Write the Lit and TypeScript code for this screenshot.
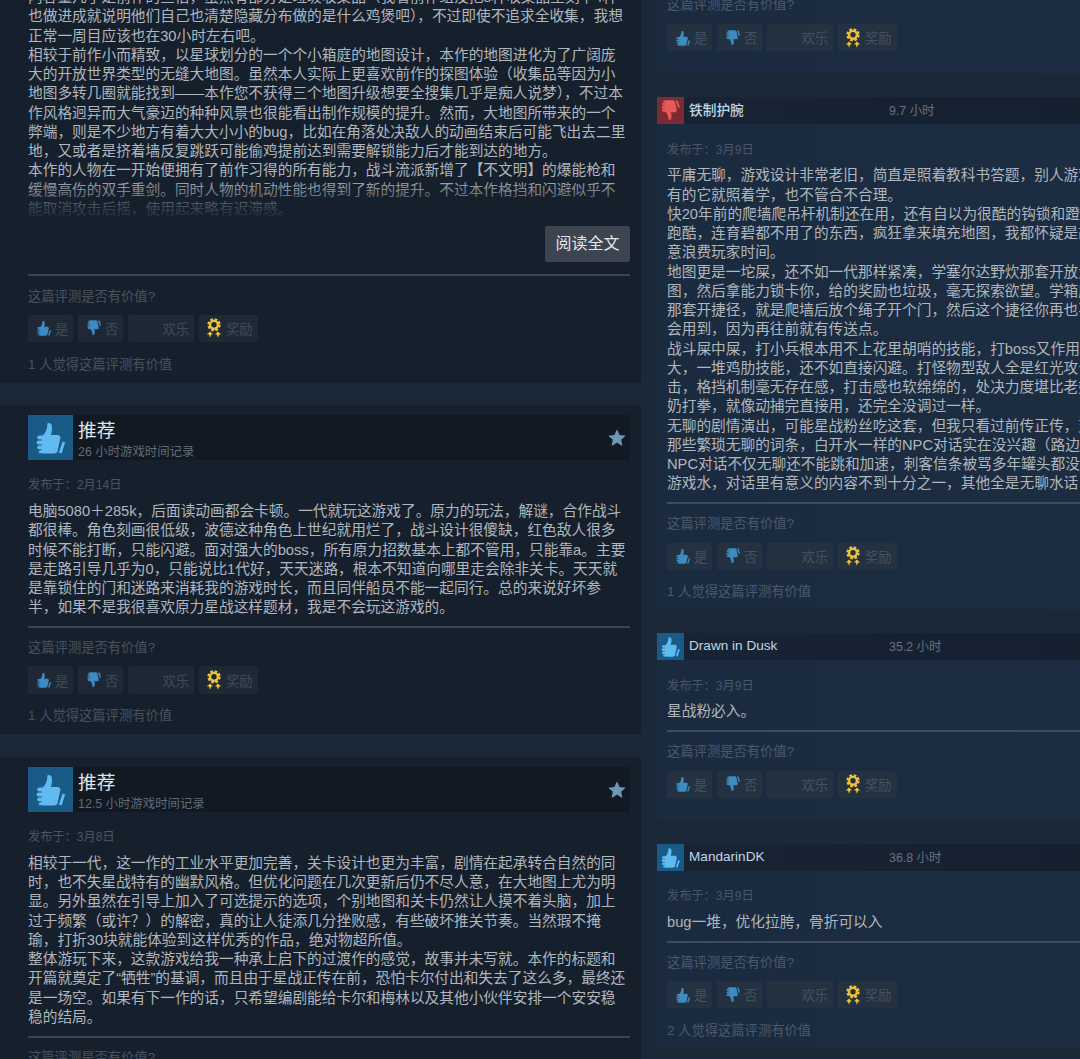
import { LitElement, html, css, svg } from "lit";
import { customElement } from "lit/decorators.js";

const thumbShape = svg`
  <path d="M19.4 7.4c1.8-1 4.1.1 4.5 2.5.5 3-.1 6.2-1 9h6.6c2 0 3.2 1.6 2.8 3.4l-2.6 12.2c-.4 1.8-1.8 3-3.6 3h-9.4c-1.3 0-2.2-.6-2.7-1.7-.2-.6-.2-15.4.2-15.8 2.9-2.6 5-6.6 5.2-12.6z"/>
  <rect x="9.2" y="19.4" width="8" height="4" rx="2"/>
  <rect x="8.6" y="24.4" width="8" height="4" rx="2"/>
  <rect x="9.2" y="29.4" width="7.4" height="3.8" rx="1.9"/>
  <rect x="10.8" y="34.2" width="6" height="3" rx="1.5"/>
  <path d="M34.6 25.6l2.6 1-3.6 10.8-2.8-1z"/>`;

const thumbUp = (cls: string) => svg`<svg class=${cls} viewBox="6 5 33 33">${thumbShape}</svg>`;
const thumbDown = (cls: string) => svg`<svg class=${cls} viewBox="6 5 33 33"><g transform="matrix(1 0 0 -1 0 43)">${thumbShape}</g></svg>`;
const medal = svg`<svg class="medal" viewBox="0 0 16 20">
  <circle cx="8" cy="6.8" r="5.5" fill="none" stroke="#f0c03a" stroke-width="2.4" stroke-dasharray="2.6 1.72"/>
  <circle cx="8" cy="6.8" r="3.9" fill="none" stroke="#f0c03a" stroke-width="2.4"/>
  <path fill="#f0c03a" d="M0.8 16.4l3.3-2.8 2.9 2.8-1.9.2-1 3.2-1.2-3.2zM15.2 16.4l-3.3-2.8-2.9 2.8 1.9.2 1 3.2 1.2-3.2z"/>
</svg>`;
const star = svg`<svg class="star" viewBox="0 0 20 19"><path d="M10 .4l2.9 6.3 6.9.8-5.1 4.6 1.4 6.8L10 15.5l-6.1 3.4 1.4-6.8L.2 7.5l6.9-.8z"/></svg>`;

const long1 = [
  "内容量几乎是前作的三倍，虽然有部分是垃圾收集品（我看前作组没把8种收集品里刻下4种",
  "也做进成就说明他们自己也清楚隐藏分布做的是什么鸡煲吧），不过即使不追求全收集，我想",
  "正常一周目应该也在30小时左右吧。",
  "相较于前作小而精致，以星球划分的一个个小箱庭的地图设计，本作的地图进化为了广阔庞",
  "大的开放世界类型的无缝大地图。虽然本人实际上更喜欢前作的探图体验（收集品等因为小",
  "地图多转几圈就能找到——本作您不获得三个地图升级想要全搜集几乎是痴人说梦），不过本",
  "作风格迥异而大气豪迈的种种风景也很能看出制作规模的提升。然而，大地图所带来的一个",
  "弊端，则是不少地方有着大大小小的bug，比如在角落处决敌人的动画结束后可能飞出去二里",
  "地，又或者是挤着墙反复跳跃可能偷鸡提前达到需要解锁能力后才能到达的地方。",
  "本作的人物在一开始便拥有了前作习得的所有能力，战斗流派新增了【不文明】的爆能枪和",
  "缓慢高伤的双手重剑。同时人物的机动性能也得到了新的提升。不过本作格挡和闪避似乎不",
  "能取消攻击后摇，使用起来略有迟滞感。",
];
const long2 = [
  "电脑5080＋285k，后面读动画都会卡顿。一代就玩这游戏了。原力的玩法，解谜，合作战斗",
  "都很棒。角色刻画很低级，波德这种角色上世纪就用烂了，战斗设计很傻缺，红色敌人很多",
  "时候不能打断，只能闪避。面对强大的boss，所有原力招数基本上都不管用，只能靠a。主要",
  "是走路引导几乎为0，只能说比1代好，天天迷路，根本不知道向哪里走会除非关卡。天天就",
  "是靠锁住的门和迷路来消耗我的游戏时长，而且同伴船员不能一起同行。总的来说好坏参",
  "半，如果不是我很喜欢原力星战这样题材，我是不会玩这游戏的。",
];
const long3 = [
  "相较于一代，这一作的工业水平更加完善，关卡设计也更为丰富，剧情在起承转合自然的同",
  "时，也不失星战特有的幽默风格。但优化问题在几次更新后仍不尽人意，在大地图上尤为明",
  "显。另外虽然在引导上加入了可选提示的选项，个别地图和关卡仍然让人摸不着头脑，加上",
  "过于频繁（或许？）的解密，真的让人徒添几分挫败感，有些破坏推关节奏。当然瑕不掩",
  "瑜，打折30块就能体验到这样优秀的作品，绝对物超所值。",
  "整体游玩下来，这款游戏给我一种承上启下的过渡作的感觉，故事并未写就。本作的标题和",
  "开篇就奠定了“牺牲”的基调，而且由于星战正传在前，恐怕卡尔付出和失去了这么多，最终还",
  "是一场空。如果有下一作的话，只希望编剧能给卡尔和梅林以及其他小伙伴安排一个安安稳",
  "稳的结局。",
];
const right2 = [
  "平庸无聊，游戏设计非常老旧，简直是照着教科书答题，别人游戏",
  "有的它就照着学，也不管合不合理。",
  "快20年前的爬墙爬吊杆机制还在用，还有自以为很酷的钩锁和蹬墙",
  "跑酷，连育碧都不用了的东西，疯狂拿来填充地图，我都怀疑是故",
  "意浪费玩家时间。",
  "地图更是一坨屎，还不如一代那样紧凑，学塞尔达野炊那套开放大",
  "图，然后拿能力锁卡你，给的奖励也垃圾，毫无探索欲望。学箱庭",
  "那套开捷径，就是爬墙后放个绳子开个门，然后这个捷径你再也不",
  "会用到，因为再往前就有传送点。",
  "战斗屎中屎，打小兵根本用不上花里胡哨的技能，打boss又作用不",
  "大，一堆鸡肋技能，还不如直接闪避。打怪物型敌人全是红光攻击",
  "击，格挡机制毫无存在感，打击感也软绵绵的，处决力度堪比老奶",
  "奶打拳，就像动捕完直接用，还完全没调过一样。",
  "无聊的剧情演出，可能星战粉丝吃这套，但我只看过前传正传，对",
  "那些繁琐无聊的词条，白开水一样的NPC对话实在没兴趣（路边",
  "NPC对话不仅无聊还不能跳和加速，刺客信条被骂多年罐头都没",
  "游戏水，对话里有意义的内容不到十分之一，其他全是无聊水话",
];

@customElement("app-root")
export class AppRoot extends LitElement {
  static styles = css`
    :host {
      display: block;
      width: 1080px;
      height: 1059px;
      overflow: hidden;
      background: #1b2838;
      font-family: "Liberation Sans", "Noto Sans CJK SC", sans-serif;
    }
    .page { display: flex; align-items: flex-start; }
    .col { flex: none; width: 641px; display: flex; flex-direction: column; }
    .col.left { gap: 22.5px; margin-right: 16px; }
    .col.right { gap: 24px; }
    .card { background: #16202d; padding: 10px 11px 10px 28px; }
    .right .card {
      background: linear-gradient(90deg, #1b2b3f 0%, #1d2e43 100%);
      padding: 0 0 22px 10px;
    }
    .right .card.counted { padding-bottom: 9px; }
    .right .card.first .question { margin-top: -3px; }
    .right .card.first .buttons { margin-top: 11px; }
    .card.first { padding-top: 0; }
    .head { display: flex; height: 45px; background: #111922; position: relative; }
    .right .head { height: 27px; margin-left: -10px; background: linear-gradient(90deg, #182433, #152030 60%, #17222f); }
    .tile { flex: none; width: 45px; height: 45px; background: #1a5a87; display: flex; align-items: center; justify-content: center; }
    .right .tile { width: 27px; height: 27px; }
    .tile.bad { background: #7b2c33; }
    .big { width: 33px; height: 33px; fill: #5fbaf0; }
    .small { width: 21px; height: 21px; fill: #5fbaf0; }
    .tile.bad .small { fill: #e8595c; }
    .title-block { padding-left: 5px; padding-top: 4px; }
    .title { font-size: 18.7px; line-height: 23px; color: #dfe6ec; }
    .sub { font-size: 12.4px; line-height: 15px; margin-top: 3px; color: #616c77; }
    .star { position: absolute; right: 4px; top: 14px; width: 18px; height: 17px; fill: #6b98b6; }
    .name { width: 200px; padding-left: 5px; font-size: 13.6px; line-height: 25px; color: #bfd6ea; }
    .name.bold { font-weight: 500; font-size: 13.7px; line-height: 28px; }
    .hours { font-size: 12.4px; line-height: 29px; color: #667280; }
    .date { margin-top: 17px; font-size: 12.2px; line-height: 16px; color: #4a5560; }
    .right .date { margin-top: 17.6px; color: #475667; }
    .body { margin-top: 9px; font-size: 14.7px; line-height: 19.25px; color: #b0b6bd; }
    .right .body { margin-top: 8.7px; }
    .line { white-space: nowrap; }
    .clip { position: relative; height: 235px; overflow: hidden; margin-top: -12px; }
    .clip .body { margin-top: 0; }
    .fade { position: absolute; left: 0; right: 0; bottom: 0; height: 46px; background: linear-gradient(180deg, rgba(22, 32, 45, 0), rgba(22, 32, 45, 0.78) 70%, #16202d 100%); }
    .more-row { display: flex; justify-content: flex-end; margin-top: 3px; }
    .more { width: 85px; height: 36px; border-radius: 2px; background: #3d4450; color: #e2e7ec; font-size: 16px; line-height: 36px; text-align: center; }
    .rule { height: 2px; margin-top: 8.9px; background: #3b4552; }
    .card.first .rule { margin-top: 12px; }
    .right .rule { margin-top: 8.6px; background: #3e4c5e; }
    .question { margin-top: 12px; font-size: 13.3px; line-height: 16px; color: #47525f; }
    .card.first .question { margin-top: 12.5px; }
    .right .question { margin-top: 12px; color: #4a596b; }
    .buttons { display: flex; gap: 5px; margin-top: 10px; }
    .right .buttons { margin-top: 10.5px; }
    .btn { height: 27.5px; display: flex; align-items: center; border-radius: 2px; background: #1f2936; font-size: 13.3px; color: #3f4a56; box-sizing: border-box; }
    .right .btn { height: 27px; background: #243140; color: #435163; }
    .btn.yes, .btn.no { width: 45px; padding-left: 8px; gap: 3px; }
    .btn.joy { width: 66px; justify-content: flex-end; padding-right: 5px; }
    .btn.award { width: 59px; padding-left: 7px; gap: 4px; }
    .ico { width: 16px; height: 16px; fill: #3d8bc0; flex: none; }
    .medal { width: 16px; height: 20px; flex: none; }
    .count { margin-top: 14.5px; font-size: 13.3px; line-height: 16px; color: #47525f; }
    .right .count { color: #4a596b; }
  `;

  private actions(count?: number) {
    return html`
      <div class="buttons">
        <div class="btn yes">${thumbUp("ico")}<span>是</span></div>
        <div class="btn no">${thumbDown("ico")}<span>否</span></div>
        <div class="btn joy"><span>欢乐</span></div>
        <div class="btn award">${medal}<span>奖励</span></div>
      </div>
      ${count ? html`<div class="count">${count} 人觉得这篇评测有价值</div>` : ""}
    `;
  }

  private footer(count?: number) {
    return html`
      <div class="rule"></div>
      <div class="question">这篇评测是否有价值?</div>
      ${this.actions(count)}
    `;
  }

  private lines(list: string[]) {
    return html`<div class="body">${list.map((l) => html`<div class="line">${l}</div>`)}</div>`;
  }

  private leftCard(hours: string, date: string, text: string[], count?: number) {
    return html`<section class="card">
      <div class="head">
        <div class="tile">${thumbUp("big")}</div>
        <div class="title-block">
          <div class="title">推荐</div>
          <div class="sub">${hours} 小时游戏时间记录</div>
        </div>
        ${star}
      </div>
      <div class="date">发布于：${date}</div>
      ${this.lines(text)}
      ${this.footer(count)}
    </section>`;
  }

  private rightCard(name: string, hours: string, text: string[], good: boolean, count?: number, bold = false) {
    return html`<section class="card ${count ? "counted" : ""}">
      <div class="head">
        <div class="tile ${good ? "" : "bad"}">${good ? thumbUp("small") : thumbDown("small")}</div>
        <div class="name ${bold ? "bold" : ""}">${name}</div>
        <div class="hours">${hours} 小时</div>
      </div>
      <div class="date">发布于：3月9日</div>
      ${this.lines(text)}
      ${this.footer(count)}
    </section>`;
  }

  render() {
    return html`<div class="page" lang="zh-CN">
      <div class="col left">
        <section class="card first">
          <div class="clip">${this.lines(long1)}<div class="fade"></div></div>
          <div class="more-row"><div class="more">阅读全文</div></div>
          ${this.footer(1)}
        </section>
        ${this.leftCard("26", "2月14日", long2, 1)}
        ${this.leftCard("12.5", "3月8日", long3)}
      </div>
      <div class="col right">
        <section class="card first">
          <div class="question">这篇评测是否有价值?</div>
          ${this.actions()}
        </section>
        ${this.rightCard("铁制护腕", "9.7", right2, false, 1, true)}
        ${this.rightCard("Drawn in Dusk", "35.2", ["星战粉必入。"], true)}
        ${this.rightCard("MandarinDK", "36.8", ["bug一堆，优化拉胯，骨折可以入"], true, 2)}
      </div>
    </div>`;
  }
}
